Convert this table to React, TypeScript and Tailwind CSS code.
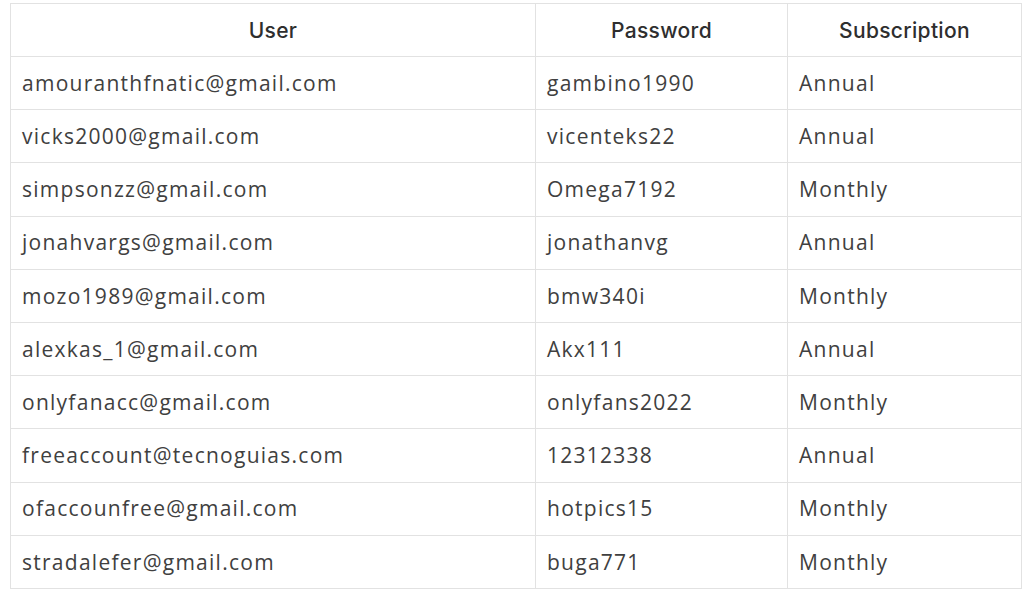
const rows: [string, string, string][] = [
  ["amouranthfnatic@gmail.com", "gambino1990", "Annual"],
  ["vicks2000@gmail.com", "vicenteks22", "Annual"],
  ["simpsonzz@gmail.com", "Omega7192", "Monthly"],
  ["jonahvargs@gmail.com", "jonathanvg", "Annual"],
  ["mozo1989@gmail.com", "bmw340i", "Monthly"],
  ["alexkas_1@gmail.com", "Akx111", "Annual"],
  ["onlyfanacc@gmail.com", "onlyfans2022", "Monthly"],
  ["freeaccount@tecnoguias.com", "12312338", "Annual"],
  ["ofaccounfree@gmail.com", "hotpics15", "Monthly"],
  ["stradalefer@gmail.com", "buga771", "Monthly"],
];

export default function App() {
  return (
    <div className="h-[592px] w-[1024px] bg-white pl-[10px] pt-[3px] font-['Open_Sans',sans-serif]">
      <table className="w-[1011px] table-fixed border-collapse text-[21px] tracking-[0.06em] text-[#404040]">
        <colgroup>
          <col className="w-[525px]" />
          <col className="w-[252px]" />
          <col className="w-[234px]" />
        </colgroup>
        <thead>
          <tr className="h-[53px]">
            {["User", "Password", "Subscription"].map((h) => (
              <th
                key={h}
                className="border border-[#e2e2e2] px-[11px] pt-[2px] text-center font-['Inter',sans-serif] text-[21px] font-medium tracking-[0.015em] text-[#2e2e2e]"
              >
                {h}
              </th>
            ))}
          </tr>
        </thead>
        <tbody>
          {rows.map(([user, pass, sub]) => (
            <tr key={user} className="h-[53.2px]">
              <td className="border border-[#e2e2e2] px-[11px] pt-[1px]">{user}</td>
              <td className="border border-[#e2e2e2] px-[11px] pt-[1px]">{pass}</td>
              <td className="border border-[#e2e2e2] px-[11px] pt-[1px]">{sub}</td>
            </tr>
          ))}
        </tbody>
      </table>
    </div>
  );
}
